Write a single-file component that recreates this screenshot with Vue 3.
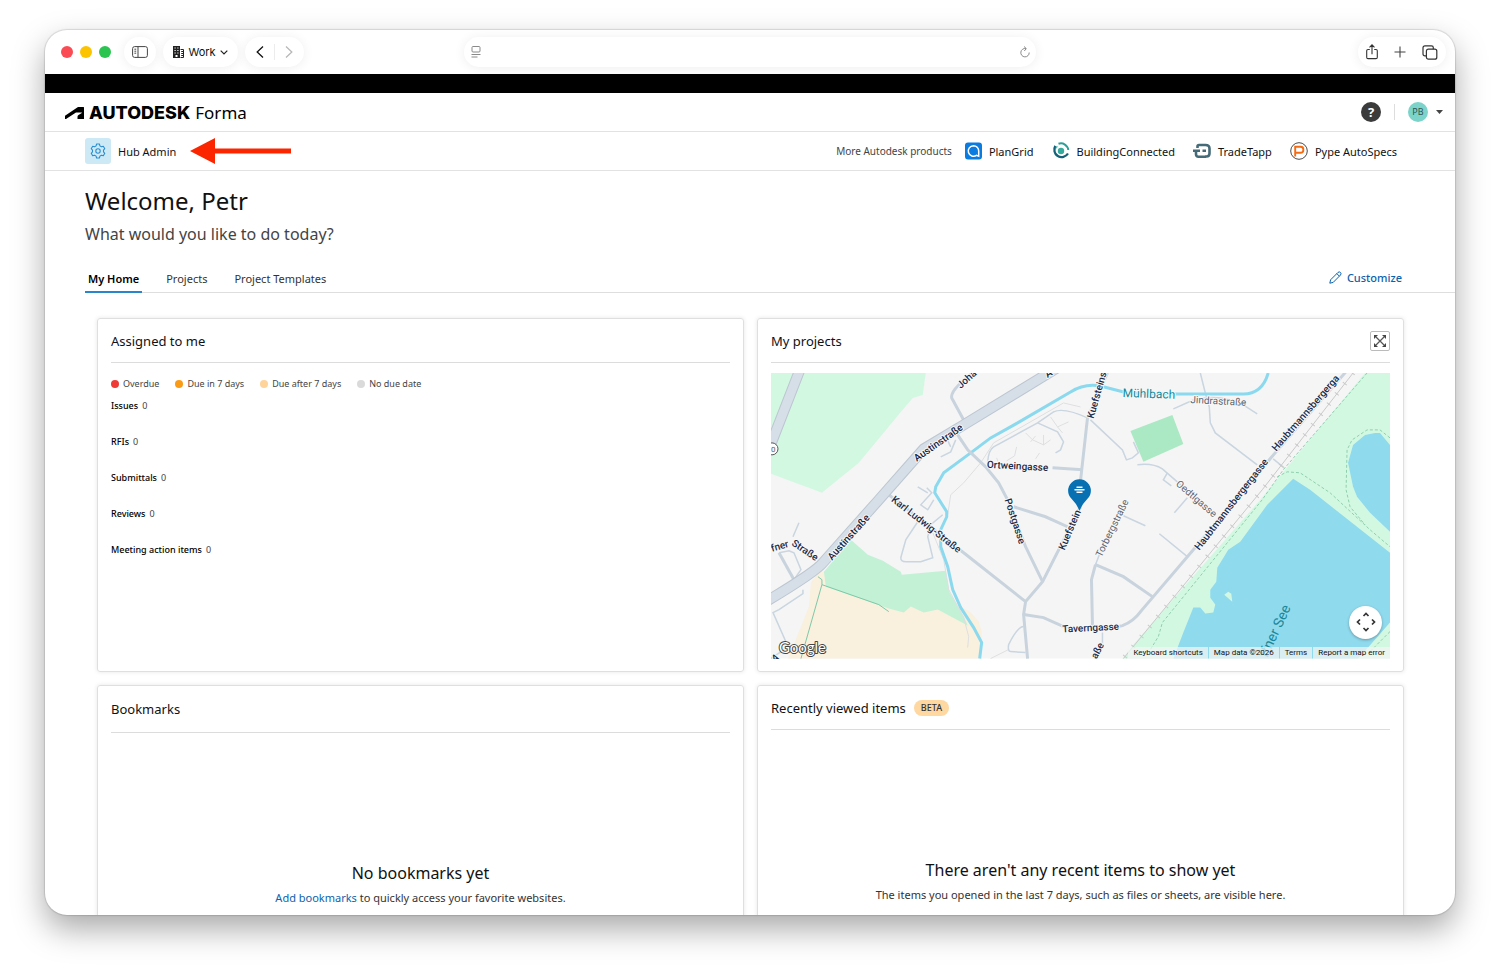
<script setup>
const legend = [
  { label: 'Overdue', tone: 'red' },
  { label: 'Due in 7 days', tone: 'orange' },
  { label: 'Due after 7 days', tone: 'peach' },
  { label: 'No due date', tone: 'grey' },
]
const assigned = [
  { label: 'Issues', count: 0 },
  { label: 'RFIs', count: 0 },
  { label: 'Submittals', count: 0 },
  { label: 'Reviews', count: 0 },
  { label: 'Meeting action items', count: 0 },
]
const tabs = ['My Home', 'Projects', 'Project Templates']

const mainRoads = [
  'M957 435 L967 450 L985 467 L998 483 L1007 500 L1025 547 L1042 582',
  'M1052 468 L1082 470',
  'M1107 373 L1087 418 L1079 490',
  'M1080 507 L1042 582 L1025 602 L1023 615 L1027 659',
  'M888 495 L963 553 L1025 602',
  'M1023 615 L1043 618 L1063 627 Q1090 634 1122 626 Q1133 622 1141 611 L1193 550 L1275 453 L1350 367',
  'M1095 565 L1123 577 L1152 597',
  'M1095 565 L1091 580 L1092 627',
  'M963 420 L951 398 Q950 393 958 385 L975 370',
  'M1013 507 L1045 517 L1067 527',
  'M778 553 L793 580',
]
const sideRoads = [
  'M987 462 Q988 450 993 447 L1037 423 L1053 412 Q1063 407 1087 418',
  'M1037 423 L1057 432 L1063 442 L1060 450 L1055 453',
  'M1090 420 L1122 450 L1126 460 L1132 458 L1138 453 L1133 442',
  'M1173 409 L1193 400 Q1220 393 1243 405 L1257 414',
  'M1200 373 L1205 393 L1209 407 L1210 423 L1215 433 L1257 465',
  'M1137 465 Q1152 463 1162 469 L1177 482 L1213 515',
  'M1167 473 L1163 480 L1171 486',
  'M1187 498 L1174 513',
  'M1123 516 L1145 526',
  'M1159 534 L1187 557',
  'M1273 459 L1284 468',
  'M1023 627 Q1017 627 1008 645 Q1007 652 1010 652 L1025 653',
  'M917 522 L905 540 L900 558 Q900 562 905 562 L920 562 L932 558 L927 537 L930 525 L942 515',
  'M917 487 L927 493 M926 488 L931 493 L920 505 L927 510 L933 500',
  'M943 432 L950 447 M955 440 L950 452 L940 457',
  'M778 553 L788 551 L793 553 L800 570 L793 580',
  'M792 537 L798 523',
  'M802 590 L802 594 L778 610 L772 613 L787 647',
  'M770 659 L783 650',
  'M1102 633 L1102 645 L1094 659',
  'M1095 565 L1100 552',
]
const faintRoads = [
  'M1080 407 L1063 403 L993 443 L980 463 L963 483 L950 495 L947 515',
  'M932 533 L943 560 L948 590 L963 618 L968 637 L967 648',
  'M1025 433 L1032 440 L1043 445 L1050 440 M1043 435 L1043 445 M1030 442 L1035 436',
  'M1016 447 L1014 456 L1006 461 M996 458 L999 466 M1035 459 L1039 453',
  'M1050 417 L1057 427 L1068 422 M1057 427 L1062 433',
  'M990 659 L1008 650',
]
const dashedPaths = [
  'M1367 373 L1283 470 L1262 500 L1162 623 L1158 637 L1150 650',
  'M1277 477 L1287 472 L1300 473 L1330 493 L1370 530 L1390 547',
  'M1390 438 L1380 430 L1367 430 L1352 440 L1347 450 L1346 490 L1350 507 L1365 525',
  'M1390 632 L1370 652',
]
const labels = [
  { t: 'Austinstraße', x: 916, y: 462, r: -35, c: 'strong' },
  { t: 'Austinstraße', x: 831, y: 561, r: -48, c: 'strong' },
  { t: 'A', x: 1047, y: 378, r: -33, c: 'strong' },
  { t: 'Joha', x: 960, y: 389, r: -42, c: 'mid' },
  { t: 'Kuefsteins', x: 1093, y: 419, r: -74, c: 'mid' },
  { t: 'Kuefstein', x: 1064, y: 551, r: -67, c: 'mid' },
  { t: 'Postgasse', x: 1004, y: 500, r: 72, c: 'mid' },
  { t: 'Karl Ludwig-Straße', x: 890, y: 501, r: 38, c: 'mid' },
  { t: 'Ortweingasse', x: 986, y: 468, r: 3, c: 'mid' },
  { t: 'Torbergstraße', x: 1101, y: 558, r: -64, c: 'soft' },
  { t: 'Taverngasse', x: 1062, y: 633, r: -3, c: 'mid' },
  { t: 'aße', x: 1096, y: 660, r: -62, c: 'mid' },
  { t: 'Jindrastraße', x: 1190, y: 403, r: 3, c: 'soft' },
  { t: 'Oedtlgasse', x: 1175, y: 485, r: 41, c: 'soft' },
  { t: 'Haubtmannsbergergasse', x: 1199, y: 551, r: -52, c: 'mid' },
  { t: 'Haubtmannsbergerga', x: 1276, y: 452, r: -49, c: 'mid' },
  { t: 'fner', x: 771, y: 552, r: -16, c: 'mid' },
  { t: 'Straße', x: 790, y: 545, r: 34, c: 'mid' },
  { t: 'A', x: 773, y: 663, r: -30, c: 'strong' },
  { t: 'Mühlbach', x: 1122, y: 397, r: 2, c: 'water' },
]
const attribution = ['Map data ©2026', 'Terms', 'Report a map error']
</script>

<template>
  <div class="desktop">
    <div class="window">
      <header class="toolbar">
        <div class="toolbar-side">
          <div class="lights"><i class="light close"></i><i class="light mini"></i><i class="light zoom"></i></div>
          <button class="pill round" aria-label="Sidebar">
            <svg width="16" height="12" viewBox="0 0 16 12" fill="none" stroke="#444"><rect x=".6" y=".6" width="14.8" height="10.8" rx="2" /><path d="M6 .6v10.8M2.4 3.2h1.8M2.4 5.2h1.8M2.4 7.2h1.8" /></svg>
          </button>
          <button class="pill profile">
            <svg width="11" height="12" viewBox="0 0 11 12"><path fill="#222" fill-rule="evenodd" d="M0 0h7v12H0zM1.5 1.6v1h1.2v-1zM4.3 1.6v1h1.2v-1zM1.5 4v1h1.2V4zM4.3 4v1h1.2V4zM1.5 6.4v1h1.2v-1zM4.3 6.4v1h1.2v-1zM2.5 9v2h2V9z" /><path fill="none" stroke="#222" d="M7.5 3.5h3v8h-3M8.2 5.5H10M8.2 7.5H10M8.2 9.5H10" /></svg>
            Work
            <svg width="8" height="5" viewBox="0 0 8 5" fill="none" stroke="#222" stroke-width="1.2"><path d="M.7.7 4 4 7.3.7" /></svg>
          </button>
          <div class="pill nav">
            <button aria-label="Back"><svg width="8" height="12" viewBox="0 0 8 12" fill="none" stroke="#111" stroke-width="1.3"><path d="M7 .6 1.2 6 7 11.4" /></svg></button>
            <i class="nav-rule"></i>
            <button aria-label="Forward"><svg width="8" height="12" viewBox="0 0 8 12" fill="none" stroke="#b8b8b8" stroke-width="1.3"><path d="M1 .6 6.8 6 1 11.4" /></svg></button>
          </div>
        </div>
        <div class="address">
          <svg width="10" height="12" viewBox="0 0 10 12" fill="none" stroke="#8a8a8a"><rect x="1" y=".5" width="8" height="5.5" rx="1" /><path d="M.5 8.5h9M.5 11h6" /></svg>
          <input type="text" aria-label="Address" />
          <button aria-label="Reload"><svg width="10" height="12" viewBox="0 0 10 12" fill="none" stroke="#8a8a8a"><path d="M6 2.6A4.2 4.2 0 1 0 9.2 6.500M4 .5 6.3 2.6 4.3 5" /></svg></button>
        </div>
        <div class="toolbar-side end">
          <div class="pill actions">
            <button aria-label="Share"><svg width="12" height="16" viewBox="0 0 12 16" fill="none" stroke="#333" stroke-width="1.1"><path d="M3.8 5.5H2Q.7 5.5.7 6.8v6.4Q.7 14.6 2 14.6h8q1.3 0 1.3-1.4V6.8Q11.3 5.5 10 5.5H8.2M6 10.3V1M3.5 3.3 6 .8l2.5 2.5" /></svg></button>
            <button aria-label="New tab"><svg width="12" height="12" viewBox="0 0 12 12" stroke="#444" stroke-width="1.1"><path d="M6 .5v11M.5 6h11" /></svg></button>
            <button aria-label="Tab overview"><svg width="16" height="15" viewBox="0 0 16 15" fill="none" stroke="#333" stroke-width="1.2"><rect x="4.4" y="4.2" width="10.4" height="10" rx="2" /><path d="M4.4 10.8H3Q1 10.8 1 9V2.8Q1 .8 3 .8h6.4q1.9 0 1.9 1.8v1.6" /></svg></button>
          </div>
        </div>
      </header>
      <div class="strip"></div>

      <div class="brandbar">
        <a href="#" class="brand">
          <svg width="19" height="12" viewBox="0 0 19 12"><path d="M0 12V8.800L13 0h5.500q.5 0 .5.5V12h-6.500V9.800q0-1.300 1-1.900l3.300-2q.4-.4-.2-.5H11L1 12z" /></svg>
          <span class="brand-name">AUTODESK</span><span class="brand-product">Forma</span>
        </a>
        <div class="account">
          <button class="help" aria-label="Help">?</button>
          <i class="account-rule"></i>
          <button class="user" aria-label="Account"><span class="avatar">PB</span><svg width="7" height="4" viewBox="0 0 7 4"><path d="M0 0h7L3.5 4z" fill="#444" /></svg></button>
        </div>
      </div>

      <div class="hubbar">
        <a href="#" class="hub">
          <span class="hub-icon">
            <svg width="16" height="16" viewBox="0 0 16 16" fill="none" stroke="#2a8fd0" stroke-width="1.1" stroke-linejoin="round"><circle cx="8" cy="8" r="2.2" /><path d="M6.600 1h2.800l.5 1.900 1.500.9 1.900-.6 1.500 2.500-1.300 1.400v1.800l1.300 1.400-1.500 2.500-1.900-.6-1.500.9L9.400 15H6.600l-.5-1.900-1.500-.9-1.900.6-1.500-2.500 1.300-1.400V7.100L1.200 5.700l1.500-2.500 1.900.6 1.500-.9z" /></svg>
          </span>
          Hub Admin
        </a>
        <svg class="arrow" width="101" height="26" viewBox="0 0 101 26" fill="#fb2500"><path d="M0 13 25 0v10.500h76v5H25V26z" /></svg>
        <nav class="products">
          <span class="products-title">More Autodesk products</span>
          <a href="#"><svg width="18" height="18" viewBox="0 0 18 18"><rect x="1" y=".5" width="17" height="17" rx="3" fill="#0a7be0" /><path d="M9.500 3.700a5.300 5.300 0 1 0 3 9.700l2.200.8V9A5.200 5.200 0 0 0 9.500 3.700z" fill="none" stroke="#fff" stroke-width="1.5" /></svg>PlanGrid</a>
          <a href="#"><svg width="18" height="18" viewBox="0 0 18 18" fill="none"><circle cx="9" cy="9" r="3.200" fill="#35a99c" /><path d="M5.500 4.300A5.800 5.800 0 0 0 7 14.800" stroke="#49bdae" stroke-width="1.400" /><path d="M6.500 1.800A7.400 7.400 0 0 1 16.300 8" stroke="#2c9f96" stroke-width="2" /><path d="M3.300 3.900A7.400 7.400 0 1 0 16 11.500" stroke="#16607a" stroke-width="2.200" /></svg>BuildingConnected</a>
          <a href="#"><svg width="18" height="18" viewBox="0 0 18 18" fill="none" stroke="#456a78" stroke-width="2.600"><path d="M4.500 6V4.500q0-1.500 1.500-1.500h6.500q4 0 4 3.500v5q0 3-3 3H12M13 8.700H9.500M13 14.700H5.500q-2.500 0-2.500-2.500V9M0 8.700h7" /></svg>TradeTapp</a>
          <a href="#"><svg width="18" height="18" viewBox="0 0 18 18" fill="none"><circle cx="9" cy="9" r="8.300" stroke="#4b4b4b" /><path d="M5.200 14.500V4.700h5.300q2.800 0 2.800 2.500v1q0 2.500-2.800 2.500H5.200" stroke="#f36b12" stroke-width="1.900" /></svg>Pype AutoSpecs</a>
        </nav>
      </div>

      <main class="page">
        <h1>Welcome, Petr</h1>
        <p class="lead">What would you like to do today?</p>
        <div class="tabbar">
          <div class="tabs">
            <button v-for="(tab, i) in tabs" :key="tab" class="tab" :class="{ active: i === 0 }">{{ tab }}</button>
          </div>
          <button class="customize">
            <svg width="13" height="13" viewBox="0 0 13 13" fill="none" stroke="#0b62ad" stroke-linejoin="round"><path d="m.8 12.200.8-3.400L9 1.400q1.300-1.100 2.500.1 1.100 1.200 0 2.500L4.200 11.400zM7.800 2.600l2.600 2.600" /></svg>
            Customize
          </button>
        </div>

        <div class="cards">
          <section class="card">
            <div class="card-head"><h2>Assigned to me</h2></div>
            <ul class="legend">
              <li v-for="l in legend" :key="l.label"><i :class="l.tone"></i>{{ l.label }}</li>
            </ul>
            <ul class="assigned">
              <li v-for="a in assigned" :key="a.label"><b>{{ a.label }}</b><span>{{ a.count }}</span></li>
            </ul>
          </section>

          <section class="card">
            <div class="card-head">
              <h2>My projects</h2>
              <button class="expand" aria-label="Expand map"><svg width="12" height="12" viewBox="0 0 12 12"><path d="m2 2 8 8M10 2l-8 8" stroke="#555" stroke-width="1.200" /><path d="M0 0h4L0 4zM12 0v4L8 0zM0 12V8l4 4zM12 12H8l4-4z" fill="#444" /></svg></button>
            </div>
            <div class="map">
              <svg class="map-art" viewBox="770 373 620 286" preserveAspectRatio="xMidYMid slice">
                <rect x="770" y="373" width="620" height="286" fill="#f5f5f5" />
                <path fill="#d3f8e2" d="M770 373H925L922 395L912 398L900 412L858 463L821 493L770 474z" />
                <path fill="#f9f0de" d="M818 572L850 570L945 590L957 605L970 613L978 622L981 632L981 659H787L797 635L808 607L810 583z" />
                <path fill="#c3f1d5" d="M850 540L867 555L882 561L900 572L901 575L945 571L949 593L963 617L967 626L937 610L923 613L910 607L903 613L888 609L825 587L823 572z" />
                <path fill="#aae9c4" d="M1130 431L1172 415L1183 444L1143 462z" />
                <path fill="#d3f8e2" d="M1365 373H1390V659H1122L1133 645L1260 500z" />
                <path fill="#90daee" d="M1293 479L1310 490L1390 553V623L1368 648L1358 659H1173L1183 633L1193 608H1200L1205 614L1213 613L1215 605L1210 598V590L1216 582L1217 568L1228 550L1240 542L1267 505L1282 490z" />
                <path fill="#90daee" d="M1353 445L1365 435L1375 433H1380L1390 445V532L1370 513L1357 497L1353 487L1348 463z" />
                <path fill="#d3f8e2" d="M1224 595L1228 592L1231 594L1232 602z" />
                <g class="dashed"><path v-for="d in dashedPaths" :key="d" :d="d" /></g>
                <path class="trail" d="M817 577L821 580V585L800 659M821 585L878 605L888 612" />
                <g class="faint"><path v-for="d in faintRoads" :key="d" :d="d" /></g>
                <g class="side"><path v-for="d in sideRoads" :key="d" :d="d" /></g>
                <path class="creek" d="M979 659L981 643L973 628L960 608L952 590L947 567L940 547V530L946 517V512L934 493L935 487L943 473L970 453L990 438L1017 423L1070 392Q1084 383 1100 386L1127 393L1177 394H1243Q1262 394 1268 373" />
                <g class="main"><path v-for="d in mainRoads" :key="d" :d="d" /></g>
                <path class="highway-edge" d="M800 367L770 444M1058 367L963 425L923 449L878 500L822 563Q815 572 765 602" />
                <path class="highway" d="M800 367L770 444M1058 367L963 425L923 449L878 500L822 563Q815 572 765 602" />
                <path d="M1353 373L1262 490L1123 659" stroke="#c9c9c9" fill="none" />
                <path d="M1353 373L1262 490L1123 659" stroke="#c9c9c9" stroke-width="5" stroke-dasharray="1 12" fill="none" />
                <circle cx="771" cy="449" r="6" fill="#fff" stroke="#555" /><text x="770" y="452" class="soft shield">0</text>
                <text v-for="(l, i) in labels" :key="i" :class="l.c" :transform="`translate(${l.x} ${l.y}) rotate(${l.r})`">{{ l.t }}</text>
                <text class="lake" transform="translate(1267 659) rotate(-65)">ffner See</text>
                <path fill="#0670b3" d="M1079 511Q1077 505 1071 499A11.400 11.400 0 1 1 1087 499Q1081 505 1079 511z" />
                <path d="M1076 487.500h6M1076 492.500h6M1074 490h10" stroke="#fff" stroke-width="1.400" />
                <text class="google" x="778" y="653">Google</text>
              </svg>
              <button class="pan" aria-label="Map camera controls">
                <svg width="20" height="20" viewBox="0 0 20 20" fill="none" stroke="#333" stroke-width="1.700"><path d="M7.500 4 10 1.500 12.500 4M7.500 16l2.500 2.500 2.500-2.500M4 7.500 1.500 10 4 12.500M16 7.500l2.500 2.500-2.500 2.500" /></svg>
              </button>
              <div class="attribution">
                <button>Keyboard shortcuts</button>
                <a v-for="a in attribution" :key="a" href="#">{{ a }}</a>
              </div>
            </div>
          </section>

          <section class="card">
            <div class="card-head tall"><h2>Bookmarks</h2></div>
            <div class="empty">
              <h3>No bookmarks yet</h3>
              <p><a href="#">Add bookmarks</a> to quickly access your favorite websites.</p>
            </div>
          </section>

          <section class="card">
            <div class="card-head"><h2>Recently viewed items</h2><span class="beta">BETA</span></div>
            <div class="empty">
              <h3>There aren't any recent items to show yet</h3>
              <p>The items you opened in the last 7 days, such as files or sheets, are visible here.</p>
            </div>
          </section>
        </div>
      </main>
    </div>
  </div>
</template>

<style>
body { background: #fff; }
</style>

<style scoped>
* { box-sizing: border-box; }
.desktop { height: 100vh; padding: 30px 45px 60px; overflow: hidden; font-family: "Noto Sans", sans-serif; font-size: 11px; color: #111; }
.window { height: 100%; display: flex; flex-direction: column; overflow: hidden; background: #fff; border-radius: 22px; box-shadow: 0 0 1px 1px rgba(0, 0, 0, .12), 0 14px 32px rgba(0, 0, 0, .34); }
.window > * { flex-shrink: 0; }
button { border: 0; background: none; padding: 0; font: inherit; color: inherit; display: flex; align-items: center; justify-content: center; }
a { color: inherit; text-decoration: none; }
h1, h2, h3, p, ul { margin: 0; padding: 0; font-weight: 400; list-style: none; }
svg { display: block; flex-shrink: 0; }

.toolbar { height: 44px; display: flex; align-items: center; }
.toolbar-side { flex: 1; display: flex; align-items: center; padding: 0 9px 0 16px; }
.toolbar-side.end { justify-content: flex-end; }
.lights { display: flex; gap: 7px; margin-right: 13px; }
.light { width: 12px; height: 12px; border-radius: 50%; }
.close { background: #fb4c55; }
.mini { background: #fcc400; }
.zoom { background: #2bc451; }
.pill { height: 30px; border-radius: 15px; background: #fff; box-shadow: 0 1px 12px rgba(0, 0, 0, .07); display: flex; align-items: center; margin-right: 7px; }
.round { width: 32px; }
.profile { width: 75px; gap: 4px; font-family: Inter, sans-serif; font-size: 11px; }
.nav { width: 59px; justify-content: space-between; padding: 0 11px; }
.nav-rule { width: 1px; height: 16px; background: #ececec; }
.address { width: 572px; max-width: 41%; height: 30px; border-radius: 15px; box-shadow: 0 1px 12px rgba(0, 0, 0, .07); display: flex; align-items: center; padding: 0 6px 0 7px; }
.address input { flex: 1; min-width: 0; border: 0; outline: 0; background: none; }
.actions { width: 88px; justify-content: space-between; padding: 0 8px; margin: 0; }
.strip { height: 19px; background: #000; }

.brandbar { height: 39px; border-bottom: 1px solid #e2e2e2; display: flex; align-items: center; justify-content: space-between; padding: 0 12px 0 20px; }
.brand { display: flex; align-items: center; gap: 5px; color: #000; padding-top: 2px; }
.brand-name { font: 800 18px/20px Inter, sans-serif; }
.brand-product { font-size: 17px; line-height: 20px; }
.account { display: flex; align-items: center; gap: 13px; }
.help { width: 20px; height: 20px; border-radius: 50%; background: #3b3b3b; color: #fff; font-weight: 700; font-size: 13px; }
.account-rule { width: 1px; height: 16px; background: #ddd; }
.user { gap: 8px; }
.avatar { width: 20px; height: 20px; border-radius: 50%; background: #7bd3ca; color: #33534f; font-size: 9px; line-height: 20px; text-align: center; }

.hubbar { height: 39px; border-bottom: 1px solid #e2e2e2; display: flex; align-items: center; padding: 0 58px 0 40px; }
.hub { display: flex; align-items: center; gap: 7px; }
.hub-icon { width: 26px; height: 26px; border-radius: 3px; background: #cde9f6; display: flex; align-items: center; justify-content: center; }
.arrow { margin-left: 14px; }
.products { margin-left: auto; display: flex; align-items: center; gap: 18px; white-space: nowrap; }
.products-title { font-size: 10px; color: #444; margin-right: -6px; }
.products a { display: flex; align-items: center; gap: 7px; }

.page { padding-left: 40px; }
h1 { font-size: 24px; line-height: 32px; padding-top: 14px; }
.lead { font-size: 16px; line-height: 22px; margin-top: 6px; color: #444; }
.tabbar { display: flex; justify-content: space-between; height: 48px; align-items: flex-end; border-bottom: 1px solid #dedede; padding-right: 53px; }
.tabs { display: flex; gap: 21px; }
.tab { height: 28px; padding: 0 3px; color: #333; margin-bottom: -1px; border-bottom: 2px solid transparent; }
.tab.active { color: #000; font-weight: 600; border-color: #2a86cc; }
.customize { height: 29px; gap: 5px; color: #0b62ad; font-weight: 500; }

.cards { display: grid; grid-template-columns: 1fr 1fr; gap: 13px; padding: 25px 51px 30px 12px; }
.card { border: 1px solid #dfdfdf; border-radius: 3px; box-shadow: 0 0 4px rgba(0, 0, 0, .1); padding: 0 13px 12px; min-height: 354px; }
.card-head { height: 44px; border-bottom: 1px solid #dcdcdc; display: flex; align-items: center; gap: 8px; }
.card-head.tall { height: 47px; }
h2 { font-size: 13px; line-height: 18px; }
.expand { width: 20px; height: 20px; margin-left: auto; border: 1px solid #bbb; border-radius: 2px; }
.legend { display: flex; gap: 16px; margin-top: 14px; font-size: 9px; line-height: 13px; color: #444; }
.legend li { display: flex; align-items: center; gap: 4px; }
.legend i { width: 8px; height: 8px; border-radius: 50%; }
.red { background: #ee3b36; }
.orange { background: #fb9a14; }
.peach { background: #fed49a; }
.grey { background: #dadada; }
.assigned { margin-top: 9px; font-size: 9px; line-height: 13px; display: grid; gap: 23px; }
.assigned li { display: flex; gap: 4px; }
.assigned b { font-weight: 500; color: #000; }
.assigned span { color: #444; }

.map { position: relative; margin-top: 10px; aspect-ratio: 620 / 286; overflow: hidden; }
.map-art { width: 100%; height: 100%; }
.map-art g path, .creek, .trail, .highway, .highway-edge { fill: none; }
.side { stroke: #c9d5e0; stroke-width: 1.5; }
.main { stroke: #c8d3dd; stroke-width: 3; }
.faint { stroke: #dedfe1; stroke-width: 1; }
.dashed { stroke: #8fcfae; stroke-width: 1; stroke-dasharray: 3 2; }
.trail { stroke: #7cc8a8; stroke-width: 1; }
.creek { stroke: #8ad9ee; stroke-width: 3; }
.highway { stroke: #d6dfe8; stroke-width: 9; }
.highway-edge { stroke: #bcc6d1; stroke-width: 11; }
.map-art text { font-family: Roboto, sans-serif; font-size: 10px; paint-order: stroke; stroke: #f8f8f8; stroke-width: 2px; stroke-linejoin: round; }
.map-art .strong { fill: #14233d; font-weight: 500; }
.map-art .mid { fill: #1c2a45; font-weight: 500; }
.map-art .soft { fill: #5d6570; }
.map-art .shield { font-size: 8px; }
.map-art .water { fill: #12899a; font-size: 12px; }
.map-art .lake { fill: #1a8797; font-size: 14px; stroke: none; }
.map-art .google { font-family: Lato, sans-serif; font-size: 15px; font-weight: 400; fill: #fff; stroke: #444; }
.pan { position: absolute; right: 8px; bottom: 20px; width: 33px; height: 33px; border-radius: 50%; background: #fff; box-shadow: 0 1px 3px rgba(0, 0, 0, .3); }
.attribution { position: absolute; right: 0; bottom: 0; height: 12px; display: flex; gap: 1px; font: 8px/12px Roboto, sans-serif; color: #111; white-space: nowrap; }
.attribution > * { padding: 0 5px; background: rgba(245, 245, 245, .72); }

.empty { padding-top: 128px; text-align: center; }
h3 { font-size: 16px; line-height: 24px; }
.empty p { margin-top: 4px; line-height: 18px; color: #333; }
.empty a { color: #0b62ad; }
.beta { background: #fed7a1; border-radius: 8px; padding: 0 7px; font-size: 9px; font-weight: 500; line-height: 16px; color: #333; }
</style>
